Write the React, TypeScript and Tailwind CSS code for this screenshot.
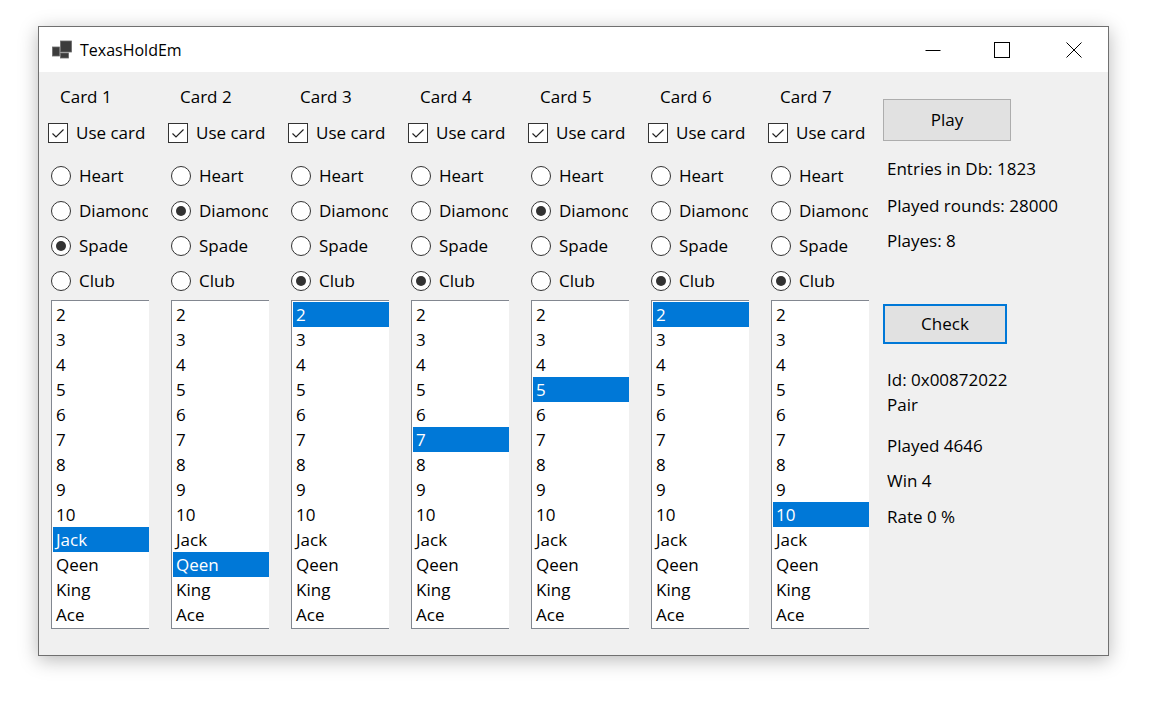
import React from "react";

const ranks = ["2", "3", "4", "5", "6", "7", "8", "9", "10", "Jack", "Qeen", "King", "Ace"];
const suits = ["Heart", "Diamond", "Spade", "Club"];

const cards = [
  { suit: "Spade", rank: "Jack" },
  { suit: "Diamond", rank: "Qeen" },
  { suit: "Club", rank: "2" },
  { suit: "Club", rank: "7" },
  { suit: "Diamond", rank: "5" },
  { suit: "Club", rank: "2" },
  { suit: "Club", rank: "10" },
];

function CheckBox({ label }: { label: string }) {
  return (
    <div className="flex h-[24px] items-center">
      <div className="flex h-[20px] w-[20px] items-center justify-center border border-[#333333] bg-white">
        <svg width="14" height="14" viewBox="0 0 14 14">
          <path d="M1.5 7.5 L5 11 L12.5 3.5" fill="none" stroke="#222" strokeWidth="1.2" />
        </svg>
      </div>
      <span className="ml-[8px]">{label}</span>
    </div>
  );
}

function Radio({ label, checked }: { label: string; checked: boolean }) {
  return (
    <div className="ml-[3px] flex h-[35px] w-[97px] items-center overflow-hidden whitespace-nowrap">
      <div className="flex h-[20px] w-[20px] shrink-0 items-center justify-center rounded-full border border-[#333333] bg-white">
        {checked && <div className="h-[10px] w-[10px] rounded-full bg-[#333333]" />}
      </div>
      <span className="ml-[8px]">{label}</span>
    </div>
  );
}

function CardColumn({ n, suit, rank, last }: { n: number; suit: string; rank: string; last?: boolean }) {
  return (
    <div className={last ? "w-[115px] shrink-0" : "w-[120px] shrink-0"}>
      <div className="ml-[12px] h-[24px] leading-[24px]">Card {n}</div>
      <div className="mt-[12px]">
        <CheckBox label="Use card" />
      </div>
      <div className="mt-[13px]">
        {suits.map((s) => (
          <Radio key={s} label={s} checked={s === suit} />
        ))}
      </div>
      <div className="ml-[3px] mt-[2px] w-[98px] border-y border-l border-[#828790] bg-white py-[1px] pl-[1px]">
        {ranks.map((r) => (
          <div
            key={r}
            className={
              r === rank
                ? "h-[25px] bg-[#0078d7] pl-[3px] leading-[25px] text-white"
                : "h-[25px] pl-[3px] leading-[25px]"
            }
          >
            {r}
          </div>
        ))}
      </div>
    </div>
  );
}

export default function App() {
  return (
    <div
      className="min-h-[707px] bg-white pl-[38px] pt-[26px] text-[17px] text-black"
      style={{ fontFamily: '"Open Sans", "Noto Sans", sans-serif' }}
    >
      <div className="flex h-[630px] w-[1071px] flex-col border border-[#707070] bg-[#f0f0f0] shadow-[0_4px_18px_rgba(0,0,0,0.28)]">
        {/* title bar */}
        <div className="flex h-[45px] items-center bg-white">
          <svg className="ml-[13px]" width="20" height="20" viewBox="0 0 20 20">
            <rect x="8.5" y="1" width="11" height="11" fill="#3c3c3c" stroke="#6a6a6a" strokeWidth="0.8" />
            <rect x="0.5" y="7" width="7" height="9" fill="#3c3c3c" stroke="#6a6a6a" strokeWidth="0.8" />
            <rect x="8.5" y="13" width="8" height="5" fill="#3c3c3c" stroke="#6a6a6a" strokeWidth="0.8" />
          </svg>
          <span className="ml-[8px] text-[16px]">TexasHoldEm</span>
          <div className="ml-auto flex h-full">
            <div className="flex h-full w-[69px] items-center justify-center pr-[6px]">
              <svg width="16" height="16" viewBox="0 0 16 16">
                <path d="M0.5 8.5 H15.5" stroke="#000" strokeWidth="1" />
              </svg>
            </div>
            <div className="flex h-full w-[69px] items-center justify-center pr-[6px]">
              <svg width="16" height="16" viewBox="0 0 16 16">
                <rect x="0.5" y="0.5" width="15" height="15" fill="none" stroke="#000" strokeWidth="1" />
              </svg>
            </div>
            <div className="flex h-full w-[69px] items-center justify-center">
              <svg width="16" height="16" viewBox="0 0 16 16">
                <path d="M0.5 0.5 L15.5 15.5 M15.5 0.5 L0.5 15.5" stroke="#000" strokeWidth="1" />
              </svg>
            </div>
          </div>
        </div>

        {/* body */}
        <div className="flex pl-[9px] pt-[13px]">
          {cards.map((c, i) => (
            <CardColumn key={i} n={i + 1} suit={c.suit} rank={c.rank} last={i === 6} />
          ))}

          <div className="flex flex-col pt-[14px]">
            <button className="h-[42px] w-[128px] border border-[#adadad] bg-[#e1e1e1]">Play</button>
            <div className="ml-[4px] mt-[16px] leading-[24px]">Entries in Db: 1823</div>
            <div className="ml-[4px] mt-[13px] leading-[24px]">Played rounds: 28000</div>
            <div className="ml-[4px] mt-[11px] leading-[24px]">Playes: 8</div>
            <button className="mt-[51px] h-[40px] w-[124px] border-2 border-[#0078d7] bg-[#e1e1e1]">Check</button>
            <div className="ml-[4px] mt-[23px] leading-[25px]">Id: 0x00872022</div>
            <div className="ml-[4px] leading-[25px]">Pair</div>
            <div className="ml-[4px] mt-[17px] leading-[24px]">Played 4646</div>
            <div className="ml-[4px] mt-[11px] leading-[24px]">Win 4</div>
            <div className="ml-[4px] mt-[12px] leading-[24px]">Rate 0 %</div>
          </div>
        </div>
      </div>
    </div>
  );
}
